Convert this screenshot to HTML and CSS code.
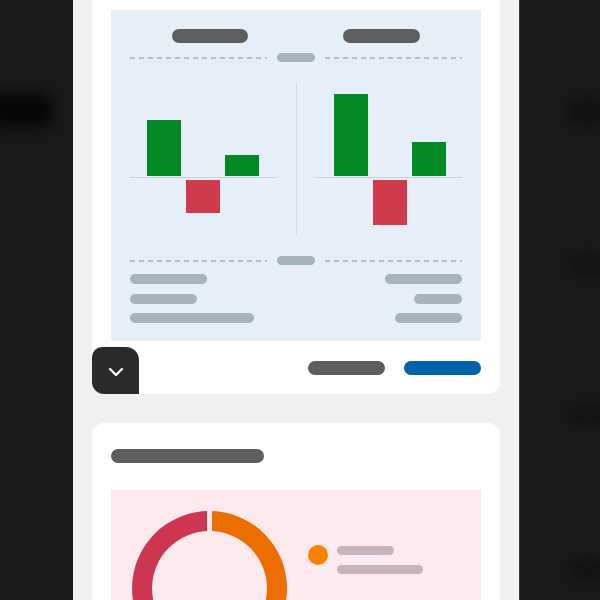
FILE: index.html
```html
<!DOCTYPE html>
<html lang="en">
<head>
<meta charset="utf-8">
<title>Dashboard</title>
<link rel="stylesheet" href="styles.css">
</head>
<body>
<div class="backdrop">
  <div class="blob blob-a"></div>
  <div class="blob blob-b"></div>
  <div class="blob blob-c"></div>
  <div class="blob blob-d"></div>
  <div class="blob blob-e"></div>
</div>
<main class="panel">
  <section class="card card-top">
    <div class="compare">
      <div class="heads">
        <span class="pill dark w76"></span>
        <span class="pill dark w77"></span>
      </div>
      <div class="divider-row">
        <span class="dash"></span>
        <span class="pill mid w38"></span>
        <span class="dash"></span>
      </div>
      <div class="charts">
        <div class="chart chart-left">
          <div class="ups">
            <span class="bar green h56"></span>
            <span class="bar ghost"></span>
            <span class="bar green h21"></span>
          </div>
          <div class="axis"></div>
          <div class="downs">
            <span class="bar ghost"></span>
            <span class="bar red h33"></span>
          </div>
        </div>
        <div class="vdiv"></div>
        <div class="chart chart-right">
          <div class="ups">
            <span class="bar green h82"></span>
            <span class="bar ghost"></span>
            <span class="bar green h34"></span>
          </div>
          <div class="axis"></div>
          <div class="downs">
            <span class="bar ghost"></span>
            <span class="bar red h45"></span>
          </div>
        </div>
      </div>
      <div class="divider-row lower">
        <span class="dash"></span>
        <span class="pill mid w38"></span>
        <span class="dash"></span>
      </div>
      <div class="rows">
        <div class="row"><span class="line w77"></span><span class="line w77"></span></div>
        <div class="row"><span class="line w67"></span><span class="line w48"></span></div>
        <div class="row"><span class="line w124"></span><span class="line w67"></span></div>
      </div>
    </div>
    <div class="actions">
      <span class="btn btn-grey"></span>
      <span class="btn btn-blue"></span>
    </div>
    <button class="toggle" aria-label="Expand">
      <svg width="16" height="10" viewBox="0 0 16 10"><polyline points="2,2 8,8 14,2" fill="none" stroke="#ffffff" stroke-width="2.4" stroke-linecap="round" stroke-linejoin="round"/></svg>
    </button>
  </section>
  <section class="card card-bottom">
    <div class="title pill dark"></div>
    <div class="donut-box">
      <svg class="donut" width="155" height="155" viewBox="0 0 155 155">
        <path d="M77.5 0 A77.5 77.5 0 0 1 77.5 155 L77.5 135 A57.5 57.5 0 0 0 77.5 20 Z" fill="#ec6d00"/>
        <path d="M77.5 0 A77.5 77.5 0 0 0 77.5 155 L77.5 135 A57.5 57.5 0 0 1 77.5 20 Z" fill="#cd3650"/>
        <rect x="75" y="0" width="5" height="155" fill="#fbe9ee"/>
      </svg>
      <div class="legend">
        <span class="dot"></span>
        <div class="legend-lines">
          <span class="lline w57"></span>
          <span class="lline w86"></span>
        </div>
      </div>
    </div>
  </section>
</main>
</body>
</html>
```
FILE: styles.css
```css
* { box-sizing: border-box; }
html, body {
  margin: 0;
  padding: 0;
  height: 600px;
  overflow: hidden;
  background: #1a1a1b;
  font-family: "Liberation Sans", Arial, sans-serif;
}
body { position: relative; }

.backdrop { position: absolute; inset: 0; }
.blob { position: absolute; background: #060606; filter: blur(7px); border-radius: 10px; }
.blob-a { left: -10px; top: 94px; width: 62px; height: 34px; }
.blob-b { left: 568px; top: 100px; width: 40px; height: 24px; background: #101011; }
.blob-c { left: 568px; top: 255px; width: 40px; height: 20px; background: #121213; }
.blob-d { left: 568px; top: 405px; width: 40px; height: 18px; background: #121213; }
.blob-e { left: 568px; top: 560px; width: 40px; height: 20px; background: #121213; }

.panel {
  position: relative;
  display: flow-root;
  overflow: hidden;
  margin-left: 73px;
  width: 447px;
  height: 600px;
  background: #f0f0f1;
  padding: 0 19px;
  border-right: 1px solid #3c3c3e;
}

.card {
  background: #ffffff;
  border-radius: 12px;
  padding: 19px;
}
.card-top {
  position: relative;
  margin-top: -9px;
}

.compare {
  background: #e6eef7;
  padding: 19px 19px 18px;
  height: 331px;
}

.pill { display: block; height: 14px; border-radius: 7px; }
.dark { background: #5e5e5f; }
.mid { background: #a5b3bd; height: 9px; border-radius: 5px; }
.w76 { width: 76px; }
.w77 { width: 77px; }
.w38 { width: 38px; }

.heads {
  display: flex;
  justify-content: space-between;
  padding: 0 42px;
}

.divider-row {
  display: flex;
  align-items: center;
  gap: 10px;
  margin-top: 10px;
  height: 9px;
}
.divider-row.lower { margin-top: 21px; }
.dash {
  flex: 1;
  height: 2px;
  background: repeating-linear-gradient(90deg, #b2bec7 0 5px, transparent 5px 9px);
}

.charts {
  display: flex;
  margin-top: 21px;
  height: 152px;
}
.chart { width: 147px; display: flex; flex-direction: column; }
.chart-left .ups, .chart-left .downs { padding-left: 17px; }
.chart-right .ups, .chart-right .downs { padding-left: 19px; }
.ups {
  display: flex;
  align-items: flex-end;
  gap: 5px;
  height: 93px;
}
.axis { height: 1.5px; margin-top: 0.5px; background: #cbd4dc; }
.downs {
  display: flex;
  align-items: flex-start;
  gap: 5px;
  padding-top: 1.5px;
}
.bar { display: block; width: 34px; }
.ghost { height: 0; }
.green { background: #038a27; }
.red { background: #cf3a4d; }
.h56 { height: 56px; }
.h21 { height: 21px; }
.h82 { height: 82px; }
.h34 { height: 34px; }
.h33 { height: 33px; }
.h45 { height: 45px; }

.vdiv {
  width: 1.5px;
  background: #d2dae2;
  margin: 0 18px 0 19px;
}

.rows {
  display: flex;
  flex-direction: column;
  gap: 9.5px;
  margin-top: 9px;
}
.row { display: flex; justify-content: space-between; }
.line { display: block; height: 10px; border-radius: 5px; background: #a5b3bd; }
.w67 { width: 67px; }
.w48 { width: 48px; }
.w124 { width: 124px; }

.actions {
  display: flex;
  justify-content: flex-end;
  gap: 19px;
  margin-top: 20px;
}
.btn { display: block; width: 77px; height: 14px; border-radius: 7px; }
.btn-grey { background: #5e5e5f; }
.btn-blue { background: #0061ad; }

.toggle {
  position: absolute;
  left: 0;
  bottom: 0;
  width: 47px;
  height: 47px;
  border: 0;
  padding: 0;
  background: #2b2a2b;
  border-radius: 10px 13px 0 12px;
  display: flex;
  align-items: center;
  justify-content: center;
}
.toggle svg { margin-top: 2px; }

.card-bottom {
  margin-top: 29px;
  padding: 26px 19px 0;
  height: 300px;
}
.title { width: 153px; }

.donut-box {
  margin-top: 27px;
  background: #fbe9ee;
  height: 260px;
  padding: 21px;
  display: flex;
  align-items: flex-start;
}
.donut { display: block; flex: none; }
.legend {
  display: flex;
  align-items: flex-start;
  gap: 9px;
  margin-left: 21px;
  margin-top: 34px;
}
.dot { display: block; width: 20px; height: 20px; border-radius: 50%; background: #f98000; }
.legend-lines { display: flex; flex-direction: column; gap: 10px; margin-top: 1px; }
.lline { display: block; height: 9px; border-radius: 5px; background: #c4b5ba; }
.w57 { width: 57px; }
.w86 { width: 86px; }
```
